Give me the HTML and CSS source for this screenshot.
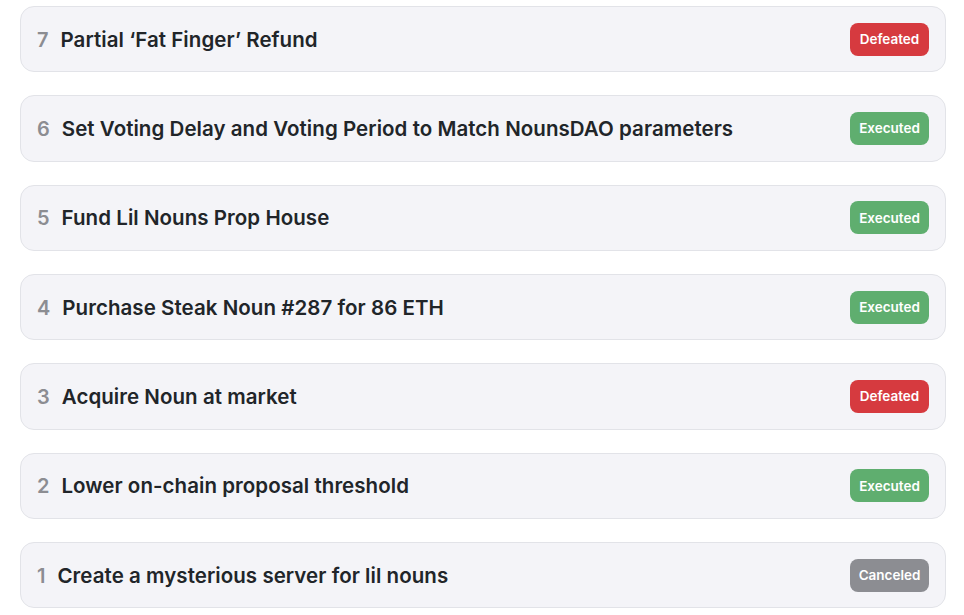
FILE: index.html
```html
<!DOCTYPE html>
<html>
<head>
<meta charset="utf-8">
<link rel="stylesheet" href="styles.css">
</head>
<body>
<div class="list">
  <div class="card"><div class="left"><span class="num">7</span><span class="title">Partial ‘Fat Finger’ Refund</span></div><span class="badge defeated">Defeated</span></div>
  <div class="card"><div class="left"><span class="num">6</span><span class="title">Set Voting Delay and Voting Period to Match NounsDAO parameters</span></div><span class="badge executed">Executed</span></div>
  <div class="card"><div class="left"><span class="num">5</span><span class="title">Fund Lil Nouns Prop House</span></div><span class="badge executed">Executed</span></div>
  <div class="card"><div class="left"><span class="num">4</span><span class="title">Purchase Steak Noun #287 for 86 ETH</span></div><span class="badge executed">Executed</span></div>
  <div class="card"><div class="left"><span class="num">3</span><span class="title">Acquire Noun at market</span></div><span class="badge defeated">Defeated</span></div>
  <div class="card"><div class="left"><span class="num">2</span><span class="title">Lower on-chain proposal threshold</span></div><span class="badge executed">Executed</span></div>
  <div class="card"><div class="left"><span class="num">1</span><span class="title">Create a mysterious server for lil nouns</span></div><span class="badge canceled">Canceled</span></div>
</div>
</body>
</html>
```
FILE: styles.css
```css
html, body {
  margin: 0;
  padding: 0;
  background: #ffffff;
}
body {
  font-family: Inter, "Noto Sans", sans-serif;
}
.list {
  display: flex;
  flex-direction: column;
  gap: 23px;
  padding: 6px 18px 0 20px;
}
.card {
  box-sizing: border-box;
  height: 66.33px;
  display: flex;
  align-items: center;
  justify-content: space-between;
  padding: 0 16px 0 16px;
  background: #f4f4f8;
  border: 1px solid #e2e3e8;
  border-radius: 14px;
}
.left {
  display: flex;
  align-items: baseline;
  gap: 12px;
}
.num {
  font-size: 20px;
  font-weight: 600;
  color: #8c8d92;
}
.title {
  font-size: 20.5px;
  font-weight: 600;
  color: #212529;
  letter-spacing: 0.05px;
}
.badge {
  box-sizing: border-box;
  width: 79px;
  height: 33px;
  border-radius: 8px;
  display: flex;
  align-items: center;
  justify-content: center;
  color: #fff;
  font-size: 13.5px;
  font-weight: 600;
}
.defeated { background: #d63a3f; }
.executed { background: #5fae6f; }
.canceled { background: #8c8d92; }
```
